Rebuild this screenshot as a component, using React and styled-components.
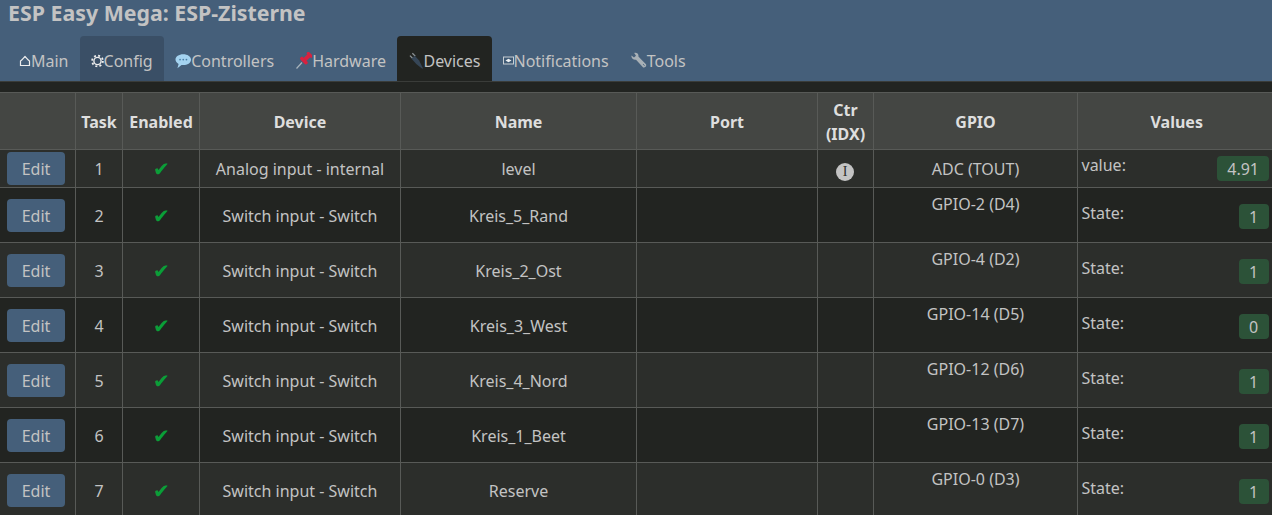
import React from "react";
import styled, { createGlobalStyle } from "styled-components";

const rows = [
  { task: 1, device: "Analog input - internal", name: "level", gpio: "ADC (TOUT)", label: "value:", value: "4.91", idx: true },
  { task: 2, device: "Switch input - Switch", name: "Kreis_5_Rand", gpio: "GPIO-2 (D4)", label: "State:", value: "1" },
  { task: 3, device: "Switch input - Switch", name: "Kreis_2_Ost", gpio: "GPIO-4 (D2)", label: "State:", value: "1" },
  { task: 4, device: "Switch input - Switch", name: "Kreis_3_West", gpio: "GPIO-14 (D5)", label: "State:", value: "0" },
  { task: 5, device: "Switch input - Switch", name: "Kreis_4_Nord", gpio: "GPIO-12 (D6)", label: "State:", value: "1" },
  { task: 6, device: "Switch input - Switch", name: "Kreis_1_Beet", gpio: "GPIO-13 (D7)", label: "State:", value: "1" },
  { task: 7, device: "Switch input - Switch", name: "Reserve", gpio: "GPIO-0 (D3)", label: "State:", value: "1" },
];

const HomeIcon = () => (
  <svg width="12" height="12" viewBox="0 0 12 12" fill="none" stroke="#eee" strokeWidth="1.2">
    <path d="M1.5 10.5V6C3 5 4.500 3 6 1.500 7.500 3 9 5 10.500 6v4.500z" />
  </svg>
);
const GearIcon = () => (
  <svg width="13" height="14" viewBox="0 0 13 14" fill="none" stroke="#eee">
    <circle cx="6.5" cy="7" r="3.6" strokeWidth="1.4" />
    <circle cx="6.5" cy="7" r="5.400" strokeWidth="1.800" strokeDasharray="2 2.240" />
  </svg>
);
const BubbleIcon = () => (
  <svg width="16.5" height="16" viewBox="0 0 17 16">
    <path d="M8.5 1C4 1 .5 3.400.5 6.500c0 1.900 1.300 3.500 3.200 4.500L2.500 15.500l4.200-3.400c.6.100 1.200.1 1.800.1 4.500 0 8-2.600 8-5.700S13 1 8.500 1z" fill="#a4d3f0" />
    <circle cx="5.200" cy="6.500" r=".9" fill="#4a7fa6" />
    <circle cx="8.500" cy="6.500" r=".9" fill="#4a7fa6" />
    <circle cx="11.800" cy="6.500" r=".9" fill="#4a7fa6" />
  </svg>
);
const PinIcon = () => (
  <svg width="16" height="17" viewBox="0 0 16 17">
    <path d="M.5 16.500L6 10.500" stroke="#a9b4bc" strokeWidth="1.200" />
    <g transform="rotate(45 9.500 7)" fill="#d8213f">
      <rect x="6" y="-.5" width="7" height="3" rx="1" />
      <rect x="7.500" y="2" width="4" height="6" />
      <rect x="5" y="7.500" width="9" height="3.500" rx="1.200" />
    </g>
  </svg>
);
const PlugIcon = () => (
  <svg width="15.500" height="17" viewBox="0 0 16 17">
    <path d="M2 3.500l3 3M4.500 1l3 3" stroke="#8f9599" strokeWidth="1.300" />
    <path d="M3.500 6.500l3.500-3 4.500 5 4 8-.8.500L8.500 12z" fill="#364657" />
  </svg>
);
const MailIcon = () => (
  <svg width="11" height="9" viewBox="0 0 11 9">
    <rect x=".5" y="1" width="10" height="7" fill="#3f5a75" stroke="#c8ced3" />
    <path d="M2.500 4.500l3-1.700 3 1.700-3 1.700z" fill="#eef1f3" />
  </svg>
);
const WrenchIcon = () => (
  <svg width="16" height="17" viewBox="0 0 16 17" fill="#a8b0b6">
    <path d="M.5 3.500L3 5.500 5 3.800 3.200 1C5.500.1 8 1.800 7.400 4.500L10.500 7.800 15 12.300c.800 2-.8 3.700-2.800 3.200L5 7.700C2.500 8.200-.2 6 .5 3.500z" />
    <path d="M12.200 12.200l1.200 1.400" stroke="#455f7a" strokeWidth="1" />
  </svg>
);

const App = () => (
  <>
    <GlobalStyle />
    <Header>
      <Title>ESP Easy Mega: ESP-Zisterne</Title>
      <Tabs>
        <Tab><HomeIcon />Main</Tab>
        <Tab $hover><GearIcon />Config</Tab>
        <Tab><BubbleIcon />Controllers</Tab>
        <Tab><PinIcon />Hardware</Tab>
        <Tab $active><PlugIcon />Devices</Tab>
        <Tab><MailIcon />Notifications</Tab>
        <Tab><WrenchIcon />Tools</Tab>
      </Tabs>
    </Header>
    <Content>
      <Table>
        <colgroup>
          <col style={{ width: 75 }} />
          <col style={{ width: 47 }} />
          <col style={{ width: 77 }} />
          <col style={{ width: 201 }} />
          <col style={{ width: 236 }} />
          <col style={{ width: 181 }} />
          <col style={{ width: 56 }} />
          <col style={{ width: 204 }} />
          <col />
        </colgroup>
        <thead>
          <tr>
            <Th></Th>
            <Th>Task</Th>
            <Th>Enabled</Th>
            <Th>Device</Th>
            <Th>Name</Th>
            <Th>Port</Th>
            <Th>Ctr (IDX)</Th>
            <Th>GPIO</Th>
            <Th>Values</Th>
          </tr>
        </thead>
        <tbody>
          {rows.map((row) => (
            <Row key={row.task} $first={row.idx}>
              <EditCell $first={row.idx}><EditButton>Edit</EditButton></EditCell>
              <Td>{row.task}</Td>
              <Td><Check>✔</Check></Td>
              <Td>{row.device}</Td>
              <Td>{row.name}</Td>
              <Td></Td>
              <Td>{row.idx && <Info>I</Info>}</Td>
              <GpioCell $first={row.idx}>{row.gpio}</GpioCell>
              <ValueCell>
                <ValueLine>
                  <span>{row.label}</span>
                  <Badge>{row.value}</Badge>
                </ValueLine>
              </ValueCell>
            </Row>
          ))}
        </tbody>
      </Table>
    </Content>
  </>
);

const GlobalStyle = createGlobalStyle`
  html, body {
    margin: 0;
    height: 515px;
    overflow: hidden;
    background: #222421;
    color: #c3c3c3;
    font-family: "Noto Sans", sans-serif;
    font-size: 16px;
  }
`;

const Header = styled.header`
  height: 81px;
  background: #455f7a;
  padding-left: 8px;
  box-sizing: border-box;
`;

const Title = styled.h1`
  margin: 0;
  height: 36px;
  font-size: 21.330px;
  line-height: 26px;
  font-weight: 700;
  color: #c3c3c3;
`;

const Tabs = styled.nav`
  display: flex;
  height: 45px;
`;

const Tab = styled.a`
  display: flex;
  align-items: center;
  height: 45px;
  box-sizing: border-box;
  padding: 4px 11px 0;
  border-radius: 4px 4px 0 0;
  background: ${(p) => (p.$active ? "#222421" : p.$hover ? "#3a4f66" : "transparent")};
  color: #c3c3c3;
  white-space: nowrap;
`;

const Content = styled.main`
  padding-top: 10px;
  border-top: 1px solid #3a3c39;
`;

const Table = styled.table`
  width: 1272px;
  table-layout: fixed;
  border-collapse: collapse;
  text-align: center;
`;

const Th = styled.th`
  height: 57px;
  padding: 1px 4px 0 5px;
  box-sizing: border-box;
  background: #444643;
  border: 1px solid #585a57;
  color: #dedede;
  font-weight: 700;
  line-height: 24px;
  &:first-child { border-left: 0; }
  &:last-child { border-right: 0; padding-left: 8px; }
`;

const Row = styled.tr`
  height: ${(p) => (p.$first ? "38px" : "55px")};
  background: ${(p) => (p.$first ? "#2c2e2b" : "#222421")};
  &:nth-child(odd) { background: #2c2e2b; }
  & > td {
    padding-top: ${(p) => (p.$first ? "0" : "2px")};
  }
`;

const Td = styled.td`
  padding: 0 0 0 1px;
  border: 1px solid #585a57;
  &:first-child { border-left: 0; }
  &:last-child { border-right: 0; }
`;

const EditCell = styled(Td)`
  padding-left: 7px;
  text-align: left;
  &&&& { padding-top: ${(p) => (p.$first ? "0" : "1px")}; }
`;

const EditButton = styled.button`
  display: block;
  width: 58px;
  height: 33px;
  padding: 0;
  border: 0;
  border-radius: 4px;
  background: #455f7a;
  color: #c3c3c3;
  font: inherit;
`;

const Check = styled.span`
  padding-left: 1px;
  color: #0a9e38;
  font-size: 20px;
  line-height: 20px;
  vertical-align: -1px;
`;

const Info = styled.span`
  display: inline-flex;
  align-items: center;
  justify-content: center;
  width: 18px;
  height: 18px;
  margin-left: -1px;
  border-radius: 50%;
  background: #c3c3c3;
  color: #2c2e2b;
  font: 400 14px "Liberation Serif", serif;
  vertical-align: -3px;
`;

const GpioCell = styled(Td)`
  vertical-align: top;
  line-height: 24px;
  &&&& { padding-top: ${(p) => (p.$first ? "7px" : "4px")}; }
`;

const ValueCell = styled(Td)`
  && { padding-right: 3px; padding-left: 4px; }
  text-align: left;
`;

const ValueLine = styled.div`
  display: flex;
  justify-content: space-between;
  align-items: flex-start;
  & > span:first-child { margin-top: -2px; }
`;

const Badge = styled.span`
  min-width: 10px;
  padding: 0 10px;
  height: 25px;
  line-height: 26px;
  border-radius: 4px;
  background: #2c5238;
`;

export default App;
